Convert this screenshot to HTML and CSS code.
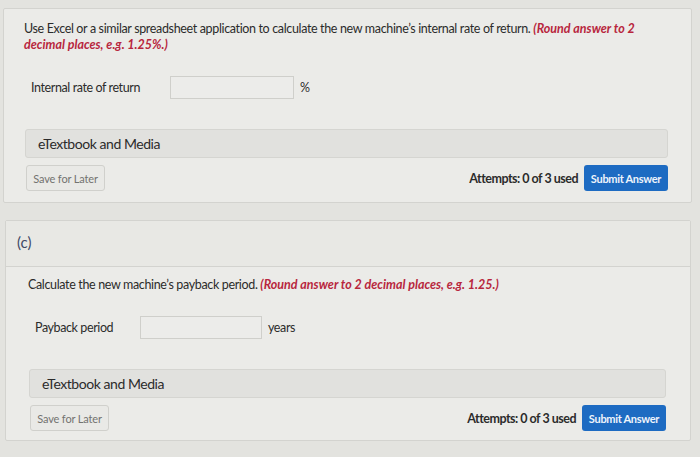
FILE: index.html
```html
<!DOCTYPE html>
<html>
<head>
<meta charset="utf-8">
<link rel="stylesheet" href="styles.css">
</head>
<body>
<div class="page">
  <section class="card card-top">
    <p class="question">Use Excel or a similar spreadsheet application to calculate the new machine’s internal rate of return. <em class="hint">(Round answer to 2 decimal places, e.g. 1.25%.)</em></p>
    <div class="answer-row">
      <span class="label label-irr">Internal rate of return</span>
      <span class="input input-irr"></span>
      <span class="unit">%</span>
    </div>
    <div class="media">eTextbook and Media</div>
    <div class="actions">
      <button class="save">Save for Later</button>
      <span class="attempts">Attempts: 0 of 3 used</span>
      <button class="submit">Submit Answer</button>
    </div>
  </section>

  <section class="card card-c">
    <header class="part-head">(c)</header>
    <div class="part-body">
      <p class="question">Calculate the new machine’s payback period. <em class="hint">(Round answer to 2 decimal places, e.g. 1.25.)</em></p>
      <div class="answer-row">
        <span class="label label-pay">Payback period</span>
        <span class="input input-pay"></span>
        <span class="unit">years</span>
      </div>
      <div class="media">eTextbook and Media</div>
      <div class="actions">
        <button class="save">Save for Later</button>
        <span class="attempts">Attempts: 0 of 3 used</span>
        <button class="submit">Submit Answer</button>
      </div>
    </div>
  </section>
</div>
</body>
</html>
```

FILE: styles.css
```css
html, body {
  margin: 0;
  padding: 0;
}
body {
  background: #e3e3df;
  font-family: Lato, "Liberation Sans", sans-serif;
  color: #2b2b2b;
  width: 700px;
  height: 457px;
  overflow: hidden;
}
.page {
  padding-top: 8px;
}
.card {
  box-sizing: border-box;
  background: #ebebe8;
  border: 1px solid #d3d3cf;
  border-radius: 2px;
}
.card-top {
  margin-left: 3px;
  width: 689px;
  height: 195px;
  padding: 12px 23px 0 20px;
}
.card-c {
  margin-top: 17px;
  margin-left: 5px;
  width: 686px;
  height: 221px;
}
.part-head {
  box-sizing: border-box;
  height: 46px;
  padding: 12px 0 0 11px;
  font-size: 15px;
  line-height: 18px;
  color: #3f4a66;
  background: #e8e8e4;
  border-bottom: 1px solid #d3d3cf;
}
.part-body {
  padding: 10px 24px 0 22px;
}
.question {
  margin: 0;
  font-size: 12.5px;
  letter-spacing: -0.35px;
  line-height: 16px;
  color: #2b2b2b;
}
.hint {
  font-weight: bold;
  font-style: italic;
  letter-spacing: 0;
  color: #b8263d;
}
.answer-row {
  display: flex;
  align-items: center;
  margin-top: 23px;
  padding-left: 7px;
  font-size: 12.5px;
  letter-spacing: -0.4px;
}
.label-irr { width: 139px; }
.label-pay { width: 105px; }
.input {
  box-sizing: border-box;
  height: 23px;
  border: 1px solid #cfcfcb;
  background: #ececea;
}
.input-irr { width: 124px; }
.input-pay { width: 122px; }
.unit {
  margin-left: 6px;
}
.media {
  box-sizing: border-box;
  margin-top: 30px;
  margin-left: 1px;
  height: 29px;
  padding-left: 12px;
  display: flex;
  align-items: center;
  font-size: 14px;
  letter-spacing: -0.45px;
  background: #e1e1de;
  border: 1px solid #d5d5d1;
  border-radius: 3px;
}
.actions {
  display: flex;
  align-items: center;
  margin-top: 7px;
  margin-left: 2px;
}
.save {
  box-sizing: border-box;
  height: 26px;
  width: 79px;
  padding: 0;
  font-family: Lato, "Liberation Sans", sans-serif;
  font-size: 11px;
  letter-spacing: -0.15px;
  color: #737370;
  background: #e9e9e6;
  border: 1px solid #d0d0cc;
  border-radius: 3px;
}
.attempts {
  margin-left: auto;
  margin-right: 6px;
  font-size: 12.5px;
  letter-spacing: -0.5px;
  font-weight: bold;
  color: #2b2b2b;
}
.submit {
  box-sizing: border-box;
  height: 26px;
  width: 84px;
  padding: 0;
  font-family: Lato, "Liberation Sans", sans-serif;
  font-size: 11px;
  letter-spacing: -0.3px;
  font-weight: bold;
  color: #eef4fb;
  background: #1d6bc2;
  border: none;
  border-radius: 3px;
}
```
